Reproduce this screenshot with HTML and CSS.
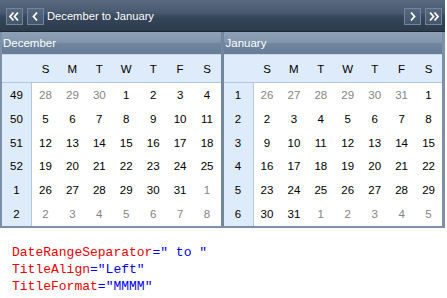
FILE: index.html
```html
<!DOCTYPE html>
<html>
<head>
<meta charset="utf-8">
<link rel="stylesheet" href="styles.css">
</head>
<body>
<div class="cal">
  <div class="titlebar">
    <span class="nav"><svg width="15" height="15" viewBox="0 0 15 15"><polyline points="6.5,3.5 3,7.5 6.5,11.5" /><polyline points="11,3.5 7.5,7.5 11,11.5" /></svg></span>
    <span class="nav"><svg width="15" height="15" viewBox="0 0 15 15"><polyline points="9,3.5 5.5,7.5 9,11.5" /></svg></span>
    <span class="title">December to January</span>
    <span class="spacer"></span>
    <span class="nav"><svg width="15" height="15" viewBox="0 0 15 15"><polyline points="6,3.5 9.5,7.5 6,11.5" /></svg></span>
    <span class="nav"><svg width="15" height="15" viewBox="0 0 15 15"><polyline points="4,3.5 7.5,7.5 4,11.5" /><polyline points="8.5,3.5 12,7.5 8.5,11.5" /></svg></span>
  </div>
  <div class="months">
    <div class="month">
      <div class="mhead">December</div>
      <div class="grid">
        <div class="hd wk"></div><div class="hd">S</div><div class="hd">M</div><div class="hd">T</div><div class="hd">W</div><div class="hd">T</div><div class="hd">F</div><div class="hd">S</div>
        <div class="wk">49</div><div class="o">28</div><div class="o">29</div><div class="o">30</div><div>1</div><div>2</div><div>3</div><div>4</div>
        <div class="wk">50</div><div>5</div><div>6</div><div>7</div><div>8</div><div>9</div><div>10</div><div>11</div>
        <div class="wk">51</div><div>12</div><div>13</div><div>14</div><div>15</div><div>16</div><div>17</div><div>18</div>
        <div class="wk">52</div><div>19</div><div>20</div><div>21</div><div>22</div><div>23</div><div>24</div><div>25</div>
        <div class="wk">1</div><div>26</div><div>27</div><div>28</div><div>29</div><div>30</div><div>31</div><div class="o">1</div>
        <div class="wk">2</div><div class="o">2</div><div class="o">3</div><div class="o">4</div><div class="o">5</div><div class="o">6</div><div class="o">7</div><div class="o">8</div>
      </div>
    </div>
    <div class="sep"></div>
    <div class="month">
      <div class="mhead">January</div>
      <div class="grid">
        <div class="hd wk"></div><div class="hd">S</div><div class="hd">M</div><div class="hd">T</div><div class="hd">W</div><div class="hd">T</div><div class="hd">F</div><div class="hd">S</div>
        <div class="wk">1</div><div class="o">26</div><div class="o">27</div><div class="o">28</div><div class="o">29</div><div class="o">30</div><div class="o">31</div><div>1</div>
        <div class="wk">2</div><div>2</div><div>3</div><div>4</div><div>5</div><div>6</div><div>7</div><div>8</div>
        <div class="wk">3</div><div>9</div><div>10</div><div>11</div><div>12</div><div>13</div><div>14</div><div>15</div>
        <div class="wk">4</div><div>16</div><div>17</div><div>18</div><div>19</div><div>20</div><div>21</div><div>22</div>
        <div class="wk">5</div><div>23</div><div>24</div><div>25</div><div>26</div><div>27</div><div>28</div><div>29</div>
        <div class="wk">6</div><div>30</div><div>31</div><div class="o">1</div><div class="o">2</div><div class="o">3</div><div class="o">4</div><div class="o">5</div>
      </div>
    </div>
  </div>
</div>
<div class="code">
  <div><span class="k">DateRangeSeparator</span><span class="v">=" to "</span></div>
  <div><span class="k">TitleAlign</span><span class="v">="Left"</span></div>
  <div><span class="k">TitleFormat</span><span class="v">="MMMM"</span></div>
</div>
</body>
</html>
```
FILE: styles.css
```css
html, body {
  margin: 0;
  padding: 0;
  background: #ffffff;
}
body {
  font-family: "Liberation Sans", Arial, sans-serif;
}
.cal {
  width: 445px;
  box-sizing: border-box;
  border-left: 2px solid #7d90a7;
  border-right: 3px solid #7d90a7;
  border-bottom: 2px solid #7d90a7;
}
.titlebar {
  height: 31px;
  margin-left: -2px;
  margin-right: -3px;
  padding: 0 3px 0 6px;
  display: flex;
  align-items: center;
  gap: 3px;
  background: linear-gradient(#5a6b81 0%, #485a70 40%, #36465b 55%, #2c3a4c 100%);
  border-bottom: 1px solid #1f2936;
}
.nav {
  width: 15px;
  height: 15px;
  border: 1px solid #72859c;
  background: linear-gradient(#56687f, #44566c);
  display: flex;
  align-items: center;
  justify-content: center;
  margin-top: 1px;
}
.nav + .nav {
  margin-left: 1px;
}
.nav svg {
  display: block;
}
.nav polyline {
  fill: none;
  stroke: #ffffff;
  stroke-width: 1.8;
}
.title {
  color: #ffffff;
  font-size: 11.2px;
}
.spacer {
  flex: 1;
}
.months {
  display: flex;
}
.month {
  flex: 1;
  min-width: 0;
}
.sep {
  width: 3px;
  background: #72869e;
}
.mhead {
  height: 22px;
  line-height: 22px;
  padding-left: 1px;
  color: #ffffff;
  font-size: 11.5px;
  background: linear-gradient(#8ea1b6 0%, #8297ae 45%, #6f859e 55%, #667d97 100%);
  border-bottom: 1px solid #c9d9ec;
}
.month + .sep + .month .mhead {
  padding-left: 2px;
}
.grid {
  display: grid;
  grid-template-columns: 30px repeat(7, 1fr);
  grid-template-rows: 28px repeat(6, 1fr);
  height: 171px;
  font-size: 11.5px;
  color: #000000;
}
.grid > div {
  display: flex;
  align-items: center;
  justify-content: center;
}
.grid .hd {
  background: #deebfa;
  border-bottom: 1px solid #b3c6de;
  padding-top: 1px;
}
.grid .wk {
  background: #deebfa;
  border-right: 1px solid #b3c6de;
}
.grid .hd.wk {
  border-right: none;
}
.grid .o {
  color: #848484;
}
.code {
  margin: 16px 0 0 12px;
  font-family: "Liberation Mono", "Courier New", monospace;
  font-size: 13px;
  line-height: 17px;
}
.k {
  color: #ee0000;
}
.v {
  color: #0000ee;
}
```
